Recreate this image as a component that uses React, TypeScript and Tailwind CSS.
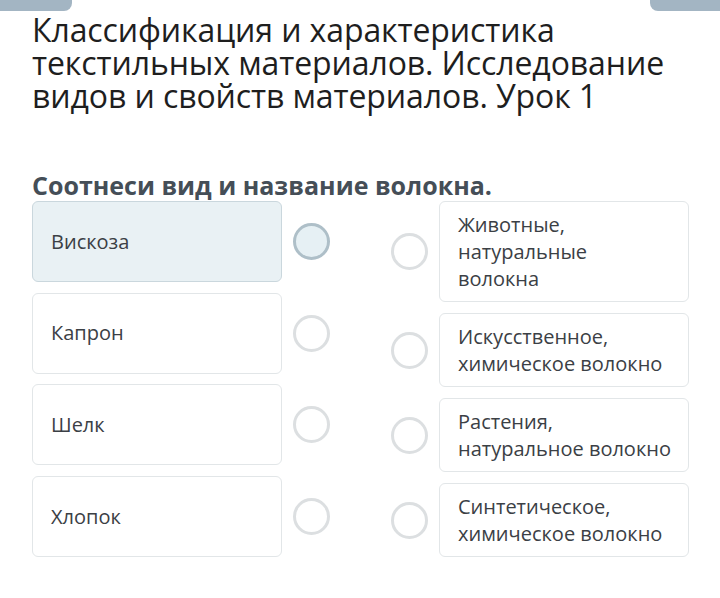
import React from "react";

const left = ["Вискоза", "Капрон", "Шелк", "Хлопок"];
const right = [
  { t: ["Животные,", "натуральные", "волокна"] },
  { t: ["Искусственное,", "химическое волокно"] },
  { t: ["Растения,", "натуральное волокно"] },
  { t: ["Синтетическое,", "химическое волокно"] },
];

export default function App() {
  return (
    <div
      className="relative w-[720px] h-[598px] bg-white overflow-hidden"
      style={{ fontFamily: '"Open Sans", "Noto Sans", sans-serif' }}
    >
      <div className="absolute left-0 top-0 w-[72px] h-[11px] bg-[#a3b5c3] rounded-br-[8px]" />
      <div className="absolute right-0 top-0 w-[70px] h-[11px] bg-[#a3b5c3] rounded-bl-[8px]" />
      <div className="pl-[32px] pr-[10px] pt-[13px]">
        <h1 className="text-[32px] leading-[33px] text-[#1e1e1e] font-normal tracking-[-0.1px]">
          Классификация и характеристика текстильных материалов. Исследование видов и свойств материалов. Урок 1
        </h1>
        <h2 className="mt-[58px] text-[25px] leading-[30px] font-bold text-[#454e57]">
          Соотнеси вид и название волокна.
        </h2>
        <div className="mt-[1px] flex">
          <div className="flex flex-col gap-[10.7px]">
            {left.map((l, i) => (
              <div key={l} className="flex items-center">
                <div
                  className={`w-[250px] h-[81px] rounded-[6px] border flex items-center px-[18px] text-[20px] text-[#3b4045] ${
                    i === 0 ? "bg-[#e9f1f4] border-[#cad7dd]" : "bg-white border-[#e2e6e8]"
                  }`}
                >
                  {l}
                </div>
                <div
                  className={`ml-[11px] w-[37px] h-[37px] rounded-full border-[3px] ${
                    i === 0 ? "bg-[#e6f0f4] border-[#aebfc8]" : "bg-white border-[#dcdfe1]"
                  }`}
                />
              </div>
            ))}
          </div>
          <div className="ml-[61px] flex flex-col gap-[11px]">
            {right.map((r, i) => (
              <div key={i} className="flex items-center">
                <div className="w-[37px] h-[37px] rounded-full border-[3px] border-[#dcdfe1] bg-white" />
                <div className="ml-[11px] w-[250px] rounded-[6px] border border-[#e2e6e8] bg-white pl-[18px] pr-[4px] py-[9px] text-[20px] leading-[27px] text-[#3b4045] whitespace-nowrap">
                  {r.t.map((s, j) => (
                    <div key={j}>{s}</div>
                  ))}
                </div>
              </div>
            ))}
          </div>
        </div>
      </div>
    </div>
  );
}
